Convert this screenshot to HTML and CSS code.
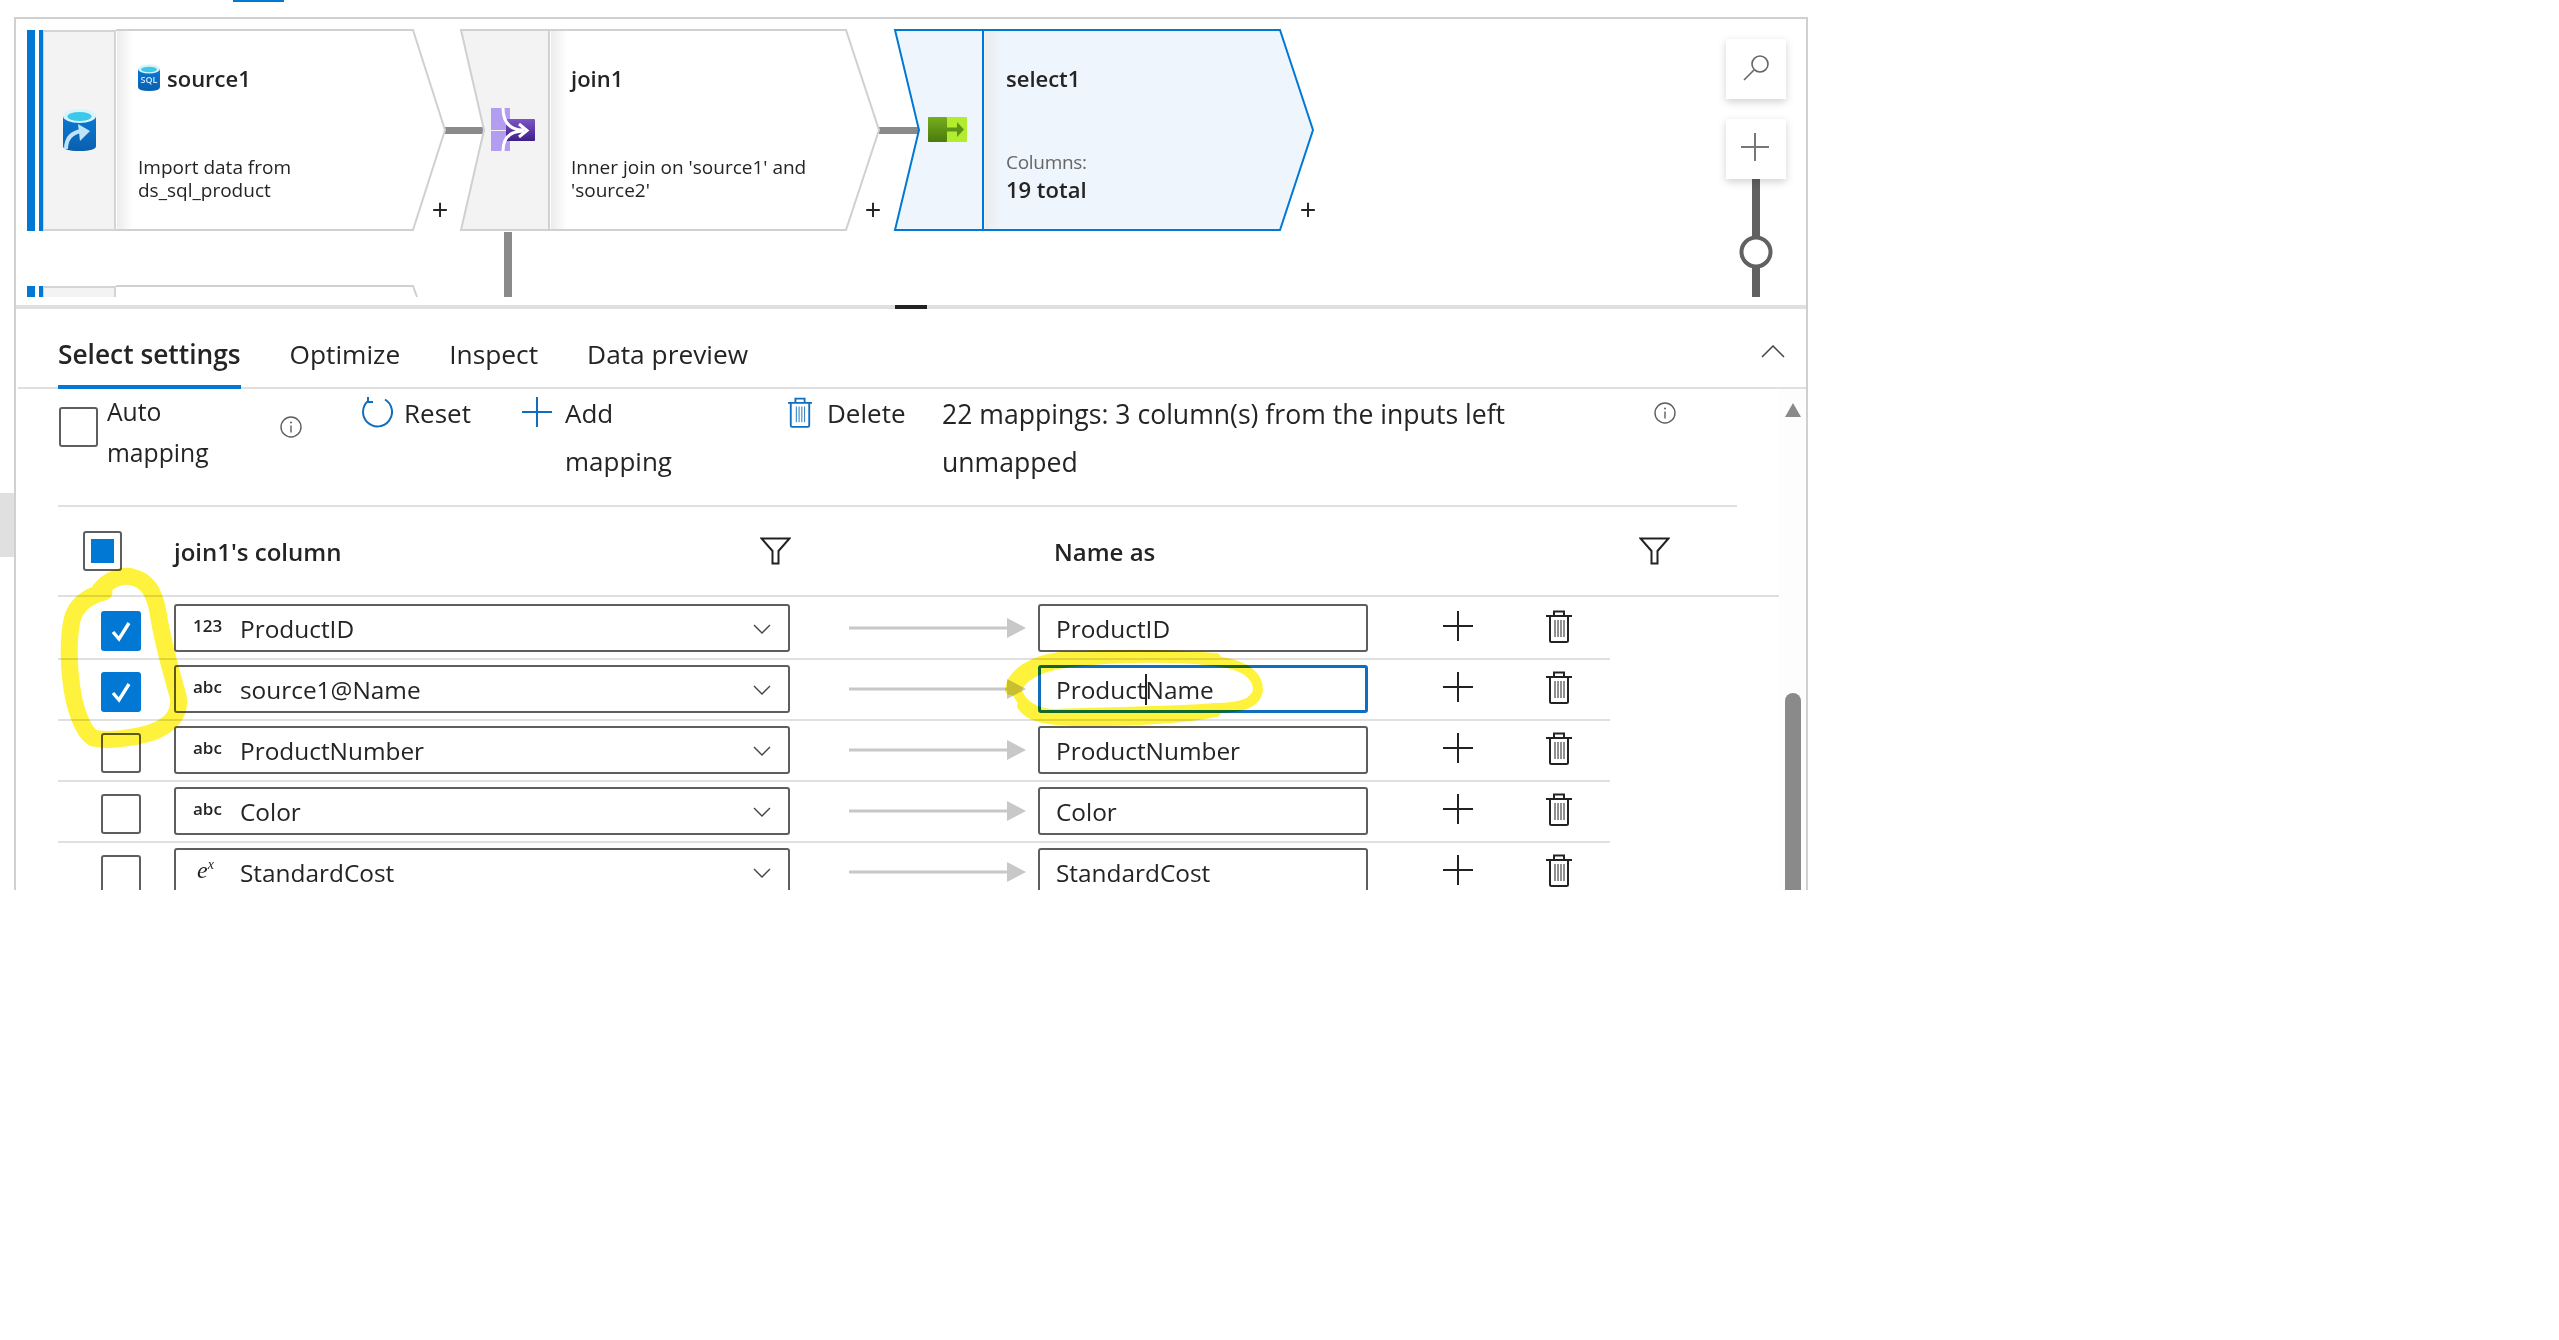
FILE: index.html
```html
<!DOCTYPE html>
<html lang="en">
<head>
    <meta charset="UTF-8" />
    <title>Select settings</title>
    <link rel="stylesheet" href="styles.css">
</head>
<body>

    <!-- Shared icons -->
    <svg class="defs" width="0" height="0">
        <symbol id="icoInfo" viewBox="0 0 22 22">
            <circle cx="11" cy="11" r="10" fill="none" stroke="#605e5c" stroke-width="1.4" />
            <path d="M11 9.5V16.5" stroke="#605e5c" stroke-width="1.4" />
            <circle cx="11" cy="6.4" r="1" fill="#605e5c" />
        </symbol>
        <symbol id="icoFilter" viewBox="0 0 31 28">
            <path d="M1.5 1.5H29.5L18.5 14V26.5H12.5V14Z" fill="none" stroke="#222" stroke-width="2" />
        </symbol>
        <symbol id="icoCheck" viewBox="0 0 40 40">
            <path d="M12 21L18 28L28 12" fill="none" stroke="#fff" stroke-width="3.4" />
        </symbol>
        <symbol id="icoChevron" viewBox="0 0 18 10">
            <path d="M1 1L9 9L17 1" fill="none" stroke="#444" stroke-width="1.4" />
        </symbol>
        <symbol id="icoArrow" viewBox="0 0 177 20">
            <path d="M0 10H158" stroke="#c8c8c8" stroke-width="3" />
            <path d="M158 0L177 10L158 20Z" fill="#c8c8c8" />
        </symbol>
        <symbol id="icoPlus" viewBox="0 0 30 30">
            <path d="M15 0V30M0 15H30" stroke="#222" stroke-width="2" />
        </symbol>
        <symbol id="icoTrash" viewBox="0 0 26 33">
            <path d="M0 6H26M8 6V1.5H18V6" fill="none" stroke="#222" stroke-width="2" />
            <path d="M4 6V30.5Q4 32 5.500 32H20.500Q22 32 22 30.500V6" fill="none" stroke="#222" stroke-width="2" />
            <path d="M9 10V27M12 10V27M15 10V27M18 10V27" stroke="#222" stroke-width="1" />
        </symbol>
    </svg>

    <div class="page">
        <div class="top-sliver"></div>
        <div class="side-handle"></div>

        <div class="frame">

            <!-- Pipeline canvas -->
            <div class="canvas">
                <svg class="flow" width="1790" height="286" viewBox="16 19 1790 286">
                    <defs>
                        <linearGradient id="fade" x1="0" x2="1" y1="0" y2="0">
                            <stop offset="0" stop-color="#ececec" />
                            <stop offset="1" stop-color="#ececec" stop-opacity="0" />
                        </linearGradient>
                        <linearGradient id="dbBlue" x1="0" x2="0" y1="0" y2="1">
                            <stop offset="0" stop-color="#0a78d4" />
                            <stop offset="1" stop-color="#0b5fae" />
                        </linearGradient>
                        <linearGradient id="joinDark" x1="0" x2="0" y1="0" y2="1">
                            <stop offset="0" stop-color="#7d55c7" />
                            <stop offset="1" stop-color="#3f1f87" />
                        </linearGradient>
                        <linearGradient id="selGreen" x1="0" x2="0" y1="0" y2="1">
                            <stop offset="0" stop-color="#76ad1c" />
                            <stop offset="1" stop-color="#4b7a0c" />
                        </linearGradient>
                    </defs>

                    <!-- links -->
                    <rect x="445" y="127" width="40" height="7" fill="#8a8a8a" />
                    <rect x="879" y="127" width="40" height="7" fill="#8a8a8a" />
                    <rect x="504" y="232" width="8" height="65" fill="#8a8a8a" />

                    <!-- source1 -->
                    <rect x="43" y="31" width="72" height="199" fill="#f3f3f3" stroke="#d4d4d4" stroke-width="2" />
                    <rect x="27" y="30" width="8" height="201" fill="#0078d4" />
                    <rect x="39" y="30" width="4" height="201" fill="#0078d4" />
                    <path d="M116 30H413L445 130L413 230H116" fill="#fff" stroke="#d0d0d0" stroke-width="2" />
                    <rect x="117" y="31" width="16" height="198" fill="url(#fade)" />

                    <!-- join1 -->
                    <path d="M461 30H549V230H461L484 130Z" fill="#f3f3f3" stroke="#d0d0d0" stroke-width="2" />
                    <path d="M550 30H846L879 130L846 230H550" fill="#fff" stroke="#d0d0d0" stroke-width="2" />
                    <rect x="551" y="31" width="16" height="198" fill="url(#fade)" />

                    <!-- select1 -->
                    <path d="M895 30H983V230H895L919 130Z" fill="#eef5fc" stroke="#0078d4" stroke-width="2" />
                    <path d="M984 30H1280L1313 130L1280 230H984" fill="#eef5fc" stroke="#0078d4" stroke-width="2" />
                    <rect x="985" y="31" width="16" height="198" fill="url(#fade)" />

                    <!-- second source, cut off by the panel -->
                    <path d="M43 297V287H115V297" fill="#f3f3f3" stroke="#d4d4d4" stroke-width="2" />
                    <rect x="27" y="286" width="8" height="11" fill="#0078d4" />
                    <rect x="39" y="286" width="4" height="11" fill="#0078d4" />
                    <path d="M116 286H413L417 297" fill="none" stroke="#d0d0d0" stroke-width="2" />

                    <!-- source icon -->
                    <path d="M63 116V146Q63 151 79 151Q96 151 96 146V116Z" fill="url(#dbBlue)" />
                    <ellipse cx="79.5" cy="116" rx="16.5" ry="7" fill="#d8f4fb" />
                    <ellipse cx="79.5" cy="116.500" rx="12" ry="4.500" fill="#3cc8e8" />
                    <path d="M66 149Q66 134 81 131" fill="none" stroke="#bfe3f7" stroke-width="4" />
                    <path d="M78 124L90 131L80 141Z" fill="#bfe3f7" />

                    <!-- small sql icon -->
                    <path d="M138 69V87Q138 91 149 91Q160 91 160 87V69Z" fill="url(#dbBlue)" />
                    <ellipse cx="149" cy="69" rx="11" ry="4.500" fill="#d8f4fb" />
                    <ellipse cx="149" cy="69.500" rx="8" ry="2.800" fill="#3cc8e8" />
                    <text x="149" y="83" class="sql-mark" text-anchor="middle">SQL</text>

                    <!-- join icon -->
                    <path d="M491 108H510V125Q510 130 515 130H491ZM491 131H515Q510 131 510 137V151H491Z" fill="#b39df0" />
                    <rect x="506" y="119" width="29" height="22" rx="1" fill="url(#joinDark)" />
                    <path d="M503 108Q503 130 524 130M503 151Q503 131 524 131" fill="none" stroke="#fff" stroke-width="3" />
                    <path d="M519 124L527 130.500L519 137" fill="none" stroke="#fff" stroke-width="3" />

                    <!-- select icon -->
                    <rect x="928" y="117" width="39" height="25" rx="1" fill="#b2ec2f" />
                    <rect x="928" y="117" width="19" height="25" rx="1" fill="url(#selGreen)" />
                    <path d="M947 127.500H957V122L964 129.500L957 137V131.500H947Z" fill="#5d9418" />

                    <!-- zoom slider -->
                    <rect x="1752" y="179" width="8" height="118" fill="#616161" />
                    <circle cx="1756" cy="252" r="14.500" fill="#fff" stroke="#616161" stroke-width="4" />
                </svg>

                <div class="node-text source-text">
                    <div class="node-name node-name-icon">source1</div>
                    <div class="node-desc">Import data from<br>ds_sql_product</div>
                </div>
                <div class="node-text join-text">
                    <div class="node-name">join1</div>
                    <div class="node-desc">Inner join on 'source1' and<br>'source2'</div>
                </div>
                <div class="node-text select-text">
                    <div class="node-name">select1</div>
                    <div class="node-cols">Columns:</div>
                    <div class="node-total">19 total</div>
                </div>

                <span class="node-add add-source">+</span>
                <span class="node-add add-join">+</span>
                <span class="node-add add-select">+</span>

                <div class="zoom-btn zoom-search">
                    <svg width="60" height="60" viewBox="0 0 60 60">
                        <circle cx="34" cy="25" r="8" fill="none" stroke="#666" stroke-width="1.600" />
                        <path d="M28 31L18 41" stroke="#666" stroke-width="1.600" />
                    </svg>
                </div>
                <div class="zoom-btn zoom-plus">
                    <svg width="60" height="60" viewBox="0 0 60 60">
                        <path d="M29 14V42M15 28H43" stroke="#777" stroke-width="2" />
                    </svg>
                </div>
            </div>

            <div class="divider"><span class="divider-grip"></span></div>

            <!-- Tabs -->
            <div class="tabs">
                <div class="tab active">Select settings</div>
                <div class="tab">Optimize</div>
                <div class="tab">Inspect</div>
                <div class="tab">Data preview</div>
                <svg class="collapse" width="24" height="13" viewBox="0 0 24 13">
                    <path d="M1 12L12 1L23 12" fill="none" stroke="#444" stroke-width="1.500" />
                </svg>
            </div>

            <div class="settings">
                <div class="main">

                    <!-- Toolbar -->
                    <div class="toolbar">
                        <span class="check check-auto"></span>
                        <div class="auto-label">Auto<br>mapping</div>
                        <svg class="info info-auto" width="22" height="22"><use href="#icoInfo" /></svg>
                        <div class="action action-reset">
                            <svg width="32" height="32" viewBox="0 0 32 32">
                                <path d="M24 2.500A14.500 14.500 0 1 1 7 4" fill="none" stroke="#106ebe" stroke-width="2" />
                                <path d="M7 0V5H12" fill="none" stroke="#106ebe" stroke-width="2" />
                            </svg>
                            <span>Reset</span>
                        </div>
                        <div class="action">
                            <svg width="30" height="30" viewBox="0 0 30 30">
                                <path d="M15 0V30M0 15H30" stroke="#106ebe" stroke-width="2" />
                            </svg>
                            <span>Add<br>mapping</span>
                        </div>
                        <div class="action action-delete">
                            <svg width="24" height="31" viewBox="0 0 26 33">
                                <path d="M0 6H26M8 6V1.500H18V6" fill="none" stroke="#106ebe" stroke-width="2" />
                                <path d="M3 6V30.500Q3 32 4.500 32H21.500Q23 32 23 30.500V6" fill="none" stroke="#106ebe" stroke-width="2" />
                                <path d="M9 10V27M12 10V27M15 10V27M18 10V27" stroke="#106ebe" stroke-width="1" />
                            </svg>
                            <span>Delete</span>
                        </div>
                        <div class="summary">22 mappings: 3 column(s) from the inputs left<br>unmapped</div>
                        <svg class="info info-summary" width="22" height="22"><use href="#icoInfo" /></svg>
                    </div>

                    <!-- Column header -->
                    <div class="map-head">
                        <span class="check check-all"><span class="check-fill"></span></span>
                        <div class="head-title">join1's column</div>
                        <svg width="31" height="28"><use href="#icoFilter" /></svg>
                        <div class="head-title">Name as</div>
                        <svg width="31" height="28"><use href="#icoFilter" /></svg>
                    </div>

                    <!-- Mapping rows -->
                    <div class="map-rows">
                        <div class="map-row">
                            <span class="check row-check checked"><svg width="40" height="40"><use href="#icoCheck" /></svg></span>
                            <div class="field row-select">
                                <span class="type-tag">123</span>
                                <span class="field-text">ProductID</span>
                                <svg class="chevron" width="18" height="10"><use href="#icoChevron" /></svg>
                            </div>
                            <svg class="row-arrow" width="177" height="20"><use href="#icoArrow" /></svg>
                            <div class="field row-input">ProductID</div>
                            <svg class="row-add" width="30" height="30"><use href="#icoPlus" /></svg>
                            <svg class="row-del" width="26" height="33"><use href="#icoTrash" /></svg>
                        </div>

                        <div class="map-row">
                            <span class="check row-check checked"><svg width="40" height="40"><use href="#icoCheck" /></svg></span>
                            <div class="field row-select">
                                <span class="type-tag">abc</span>
                                <span class="field-text">source1@Name</span>
                                <svg class="chevron" width="18" height="10"><use href="#icoChevron" /></svg>
                            </div>
                            <svg class="row-arrow" width="177" height="20"><use href="#icoArrow" /></svg>
                            <div class="field row-input focused">Product<span class="caret"></span>Name</div>
                            <svg class="row-add" width="30" height="30"><use href="#icoPlus" /></svg>
                            <svg class="row-del" width="26" height="33"><use href="#icoTrash" /></svg>
                        </div>

                        <div class="map-row">
                            <span class="check row-check"></span>
                            <div class="field row-select">
                                <span class="type-tag">abc</span>
                                <span class="field-text">ProductNumber</span>
                                <svg class="chevron" width="18" height="10"><use href="#icoChevron" /></svg>
                            </div>
                            <svg class="row-arrow" width="177" height="20"><use href="#icoArrow" /></svg>
                            <div class="field row-input">ProductNumber</div>
                            <svg class="row-add" width="30" height="30"><use href="#icoPlus" /></svg>
                            <svg class="row-del" width="26" height="33"><use href="#icoTrash" /></svg>
                        </div>

                        <div class="map-row">
                            <span class="check row-check"></span>
                            <div class="field row-select">
                                <span class="type-tag">abc</span>
                                <span class="field-text">Color</span>
                                <svg class="chevron" width="18" height="10"><use href="#icoChevron" /></svg>
                            </div>
                            <svg class="row-arrow" width="177" height="20"><use href="#icoArrow" /></svg>
                            <div class="field row-input">Color</div>
                            <svg class="row-add" width="30" height="30"><use href="#icoPlus" /></svg>
                            <svg class="row-del" width="26" height="33"><use href="#icoTrash" /></svg>
                        </div>

                        <div class="map-row">
                            <span class="check row-check"></span>
                            <div class="field row-select">
                                <span class="type-tag type-expr">e<sup>x</sup></span>
                                <span class="field-text">StandardCost</span>
                                <svg class="chevron" width="18" height="10"><use href="#icoChevron" /></svg>
                            </div>
                            <svg class="row-arrow" width="177" height="20"><use href="#icoArrow" /></svg>
                            <div class="field row-input">StandardCost</div>
                            <svg class="row-add" width="30" height="30"><use href="#icoPlus" /></svg>
                            <svg class="row-del" width="26" height="33"><use href="#icoTrash" /></svg>
                        </div>
                    </div>
                </div>

                <!-- Scrollbar -->
                <div class="scrollbar">
                    <span class="scroll-up"></span>
                    <span class="scroll-thumb"></span>
                </div>
            </div>
        </div>

        <!-- Yellow marker scribbles drawn on the screenshot -->
        <svg class="marker" width="1808" height="890" viewBox="0 0 1808 890">
            <path d="M100 590C108 580 122 574 132 577C146 580 154 590 158 612C162 640 170 668 178 696C181 712 172 726 150 733C130 739 108 741 93 738C84 732 78 716 74 700C68 670 68 640 72 620C76 604 88 596 104 592" fill="none" stroke="#fff23c" stroke-width="17" stroke-linecap="round" stroke-linejoin="round" />
            <path d="M1016 692C1020 676 1040 666 1070 662C1120 657 1180 656 1222 662C1246 666 1258 676 1258 690C1256 704 1240 708 1216 708C1170 712 1100 712 1056 714C1036 714 1024 706 1018 694" fill="none" stroke="#fff23c" stroke-width="10" stroke-linecap="round" stroke-linejoin="round" />
            <path d="M1010 690C1012 672 1034 660 1060 657C1110 654 1170 654 1216 658M1022 706C1030 718 1048 721 1090 721C1130 721 1180 719 1216 712" fill="none" stroke="#fff23c" stroke-width="10" stroke-linecap="round" stroke-linejoin="round" />
        </svg>
    </div>

</body>
</html>
```

FILE: styles.css
```css
* {
    margin: 0;
    padding: 0;
    box-sizing: border-box;
}

html, body {
    background: #fff;
    color: #242424;
    font-family: "Open Sans", "Noto Sans", sans-serif;
    overflow: hidden;
}

.defs {
    position: absolute;
}

svg {
    display: block;
    flex: none;
}

.page {
    display: flex;
    position: relative;
    width: 1808px;
    height: 890px;
    overflow: hidden;
}

.top-sliver {
    position: absolute;
    top: 0;
    left: 233px;
    width: 51px;
    height: 2px;
    background: #0078d4;
}

.side-handle {
    width: 14px;
    height: 64px;
    margin-top: 493px;
    background: #e0e0e0;
    flex: none;
}

.frame {
    width: 1794px;
    height: 873px;
    margin-top: 17px;
    border: 2px solid #d0d0d0;
    border-bottom: none;
    flex: none;
}

/* Pipeline canvas */
.canvas {
    position: relative;
    height: 286px;
}

.flow {
    position: absolute;
    top: 0;
    left: 0;
}

.sql-mark {
    font-family: "Open Sans", sans-serif;
    font-size: 9px;
    font-weight: 600;
    fill: #cfe8fa;
}

.node-text {
    position: absolute;
    top: 41px;
}

.source-text { left: 122px; }
.join-text { left: 555px; }
.select-text { left: 990px; }

.node-name {
    height: 36px;
    font-size: 22px;
    font-weight: 600;
    line-height: 36px;
}

.node-name-icon {
    padding-left: 29px;
}

.node-desc {
    margin-top: 60px;
    font-size: 19px;
    line-height: 23px;
}

.node-cols {
    margin-top: 55px;
    font-size: 19px;
    line-height: 23px;
    letter-spacing: -0.3px;
    color: #666;
}

.node-total {
    margin-top: 2px;
    font-size: 22px;
    font-weight: 600;
    line-height: 26px;
}

.node-add {
    position: absolute;
    top: 172px;
    width: 20px;
    font-size: 29px;
    line-height: 36px;
    text-align: center;
}

.add-source { left: 414px; }
.add-join { left: 847px; }
.add-select { left: 1282px; }

.zoom-btn {
    position: absolute;
    left: 1710px;
    width: 60px;
    height: 60px;
    background: #fff;
    box-shadow: 0 3px 8px rgba(0, 0, 0, 0.18);
}

.zoom-search { top: 20px; }
.zoom-plus { top: 100px; }

.divider {
    height: 4px;
    background: #e0e0e0;
}

.divider-grip {
    display: block;
    width: 32px;
    height: 4px;
    margin-left: 879px;
    background: #222;
}

/* Tabs */
.tabs {
    display: flex;
    align-items: flex-start;
    gap: 49px;
    height: 80px;
    margin-left: 2px;
    padding-left: 40px;
    border-bottom: 2px solid #e0e0e0;
    position: relative;
}

.tab {
    height: 80px;
    padding-top: 28px;
    font-size: 26.300px;
    line-height: 34px;
}

.tab.active {
    font-weight: 600;
    border-bottom: 4px solid #0078d4;
}

.collapse {
    margin-left: auto;
    margin-right: 21px;
    margin-top: 36px;
}

/* Settings body */
.settings {
    display: flex;
    height: 501px;
}

.main {
    flex: 1;
    padding-left: 42px;
    font-size: 24px;
}

.check {
    display: block;
    width: 39px;
    height: 40px;
    border: 2px solid #605e5c;
    border-radius: 3px;
    background: #fff;
    flex: none;
}

.toolbar {
    display: grid;
    grid-template-columns: 49px 173px 81px 161px 266px 154px 712px 22px;
    height: 118px;
    margin-right: 42px;
    border-bottom: 2px solid #e0e0e0;
}

.check-auto {
    margin: 18px 0 0 1px;
}

.auto-label {
    margin-top: 2px;
    font-size: 24.700px;
    line-height: 41px;
}

.info-auto {
    margin-top: 27px;
}

.info-summary {
    margin-top: 13px;
}

.action {
    display: flex;
    gap: 13px;
    margin-top: 8px;
    font-size: 26px;
    line-height: 48px;
}

.action span {
    margin-top: -8px;
}

.action-reset {
    gap: 11px;
}

.action-delete {
    gap: 15px;
}

.summary {
    margin-top: 1px;
    font-size: 26.600px;
    line-height: 48px;
}

.map-head {
    display: grid;
    grid-template-columns: 116px 586px 294px 585px 31px;
    align-items: center;
    height: 90px;
    border-bottom: 2px solid #e0e0e0;
}

.check-all {
    position: relative;
    margin-left: 25px;
    padding: 6px;
}

.check-fill {
    display: block;
    width: 23px;
    height: 24px;
    background: #0078d4;
}

.head-title {
    font-weight: 600;
}

.map-rows {
    width: 1552px;
    margin-top: 2px;
}

.map-row {
    display: flex;
    align-items: center;
    height: 61px;
    padding-bottom: 2px;
    border-bottom: 2px solid #e0e0e0;
}

.row-check {
    width: 40px;
    margin: 7px 33px 0 43px;
}

.row-check.checked {
    border: none;
    background: #0078d4;
}

.field {
    display: flex;
    align-items: center;
    height: 48px;
    padding-top: 2px;
    border: 2px solid #605e5c;
    border-radius: 3px;
    font-size: 24.400px;
    background: #fff;
    flex: none;
}

.row-select {
    width: 616px;
    padding-left: 17px;
}

.type-tag {
    width: 47px;
    margin-top: -6px;
    font-size: 17px;
    font-weight: 600;
}

.type-expr {
    font-family: "Liberation Serif", serif;
    font-size: 24px;
    font-style: italic;
    font-weight: 400;
    line-height: 24px;
    padding-left: 4px;
}

.type-expr sup {
    font-size: 14px;
    line-height: 0;
}

.chevron {
    margin-left: auto;
    margin-right: 17px;
}

.row-arrow {
    margin: 0 0 0 59px;
}

.row-input {
    width: 330px;
    margin-left: 12px;
    padding-left: 16px;
}

.row-input.focused {
    border: 3px solid #106ebe;
    padding-left: 15px;
}

.caret {
    display: inline-block;
    width: 2px;
    height: 31px;
    margin: 0 -1px;
    background: #222;
}

.row-add {
    margin: -4px 0 0 75px;
}

.row-del {
    margin: -2px 0 0 73px;
}

/* Scrollbar */
.scrollbar {
    display: flex;
    flex-direction: column;
    align-items: center;
    width: 27px;
    background: #fdfdfd;
    flex: none;
}

.scroll-up {
    width: 0;
    height: 0;
    margin-top: 14px;
    border-left: 8px solid transparent;
    border-right: 8px solid transparent;
    border-bottom: 14px solid #8a8a8a;
}

.scroll-thumb {
    width: 16px;
    height: 197px;
    margin-top: 276px;
    border-radius: 8px 8px 0 0;
    background: #8a8a8a;
}

/* Marker overlay */
.marker {
    position: absolute;
    top: 0;
    left: 0;
    mix-blend-mode: multiply;
    pointer-events: none;
}
```
